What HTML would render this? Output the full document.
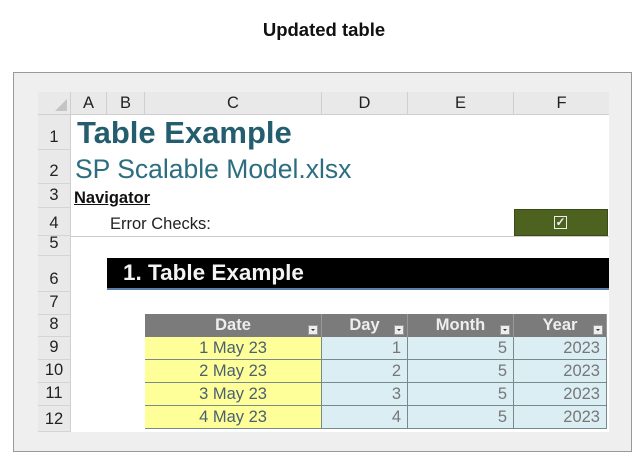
<!DOCTYPE html>
<html><head><style>
*{margin:0;padding:0;box-sizing:border-box}
body{width:640px;height:475px;background:#fff;position:relative;font-family:"Liberation Sans",Arial,sans-serif;overflow:hidden}
.a{position:absolute}
.t{white-space:nowrap}
.rh{position:absolute;left:38px;width:33px;background:#e9e9e9;border-bottom:1px solid #d4d4d4;border-right:1px solid #cfcfcf;font-size:16.5px;color:#222;text-align:center;display:flex;align-items:flex-end;justify-content:center;padding-bottom:2px}
.ch{position:absolute;top:92px;height:23px;background:#e9e9e9;border-right:1px solid #cfcfcf;border-bottom:1px solid #cfcfcf;font-size:16.5px;color:#222;text-align:center;line-height:22px}
.hd{position:absolute;top:314px;height:23px;background:#7b7b7b;color:#eee;font-weight:bold;font-size:16.5px;text-align:center;line-height:22px;border-right:1px solid #999}
.dd{position:absolute;right:3px;bottom:2px;width:10px;height:10px;background:#eee;border:1px solid #999}
.dd:after{content:"";position:absolute;left:2px;top:3px;border-left:2px solid transparent;border-right:2px solid transparent;border-top:2px solid #333}
.c{position:absolute;height:23px;font-size:16.5px;line-height:23px;border-right:1px solid #7a8a8a;border-bottom:1px solid #7a8a8a}
.y{background:#ffff99;color:#4a6070;text-align:center}
.b{background:#dbeef4;color:#777;text-align:right;padding-right:6px}
</style></head><body>
<div class="a t" style="left:0;width:648px;top:19px;text-align:center;font-weight:bold;font-size:18.5px;color:#111">Updated table</div>
<div class="a" style="left:13px;top:72px;width:619px;height:380px;background:#efefef;border:1px solid #999"></div>
<div class="a" style="left:38px;top:92px;width:571px;height:340px;background:#fff"></div>
<div class="ch" style="left:38px;width:33px"><div class="a" style="right:3px;bottom:3px;border-left:12px solid transparent;border-bottom:12px solid #c4c4c4"></div></div>
<div class="ch" style="left:71px;width:36px">A</div>
<div class="ch" style="left:107px;width:38px">B</div>
<div class="ch" style="left:145px;width:177px">C</div>
<div class="ch" style="left:322px;width:86px">D</div>
<div class="ch" style="left:408px;width:106px">E</div>
<div class="ch" style="left:514px;width:95px;border-right:none">F</div>
<div class="rh" style="top:115px;height:35px">1</div>
<div class="rh" style="top:150px;height:34px">2</div>
<div class="rh" style="top:184px;height:24px">3</div>
<div class="rh" style="top:208px;height:28px">4</div>
<div class="rh" style="top:236px;height:20px">5</div>
<div class="rh" style="top:256px;height:36px">6</div>
<div class="rh" style="top:292px;height:23px">7</div>
<div class="rh" style="top:315px;height:22px">8</div>
<div class="rh" style="top:337px;height:23px">9</div>
<div class="rh" style="top:360px;height:23px">10</div>
<div class="rh" style="top:383px;height:23px">11</div>
<div class="rh" style="top:406px;height:26px">12</div>
<div class="a t" style="left:77px;top:115px;font-size:31px;font-weight:bold;color:#245e6e">Table Example</div>
<div class="a t" style="left:75px;top:154px;font-size:26.5px;color:#2c6e80">SP Scalable Model.xlsx</div>
<div class="a t" style="left:74px;top:189px;font-size:16.5px;font-weight:bold;text-decoration:underline;color:#111">Navigator</div>
<div class="a t" style="left:110px;top:215px;font-size:16.5px;color:#222">Error Checks:</div>
<div class="a" style="left:71px;top:236px;width:538px;height:1px;background:#ccc"></div>
<div class="a" style="left:514px;top:209px;width:94px;height:27px;background:#4e6220;border:1px solid #3a4a18"><div class="a" style="left:39px;top:6px;width:13px;height:13px;border:1.5px solid #eee;color:#eee;font-size:12px;line-height:10px;text-align:center;font-weight:bold">✓</div></div>
<div class="a" style="left:107px;top:258px;width:502px;height:32px;background:#000;border-bottom:2px solid #5a7fa8"></div>
<div class="a t" style="left:123px;top:260px;font-size:22.5px;font-weight:bold;color:#f4f4f4">1. Table Example</div>
<div class="hd" style="left:145px;width:177px">Date<span class="dd"></span></div>
<div class="hd" style="left:322px;width:86px">Day<span class="dd"></span></div>
<div class="hd" style="left:408px;width:106px">Month<span class="dd"></span></div>
<div class="hd" style="left:514px;width:93px">Year<span class="dd"></span></div>
<div class="c y" style="left:145px;top:337px;width:177px">1 May 23</div><div class="c b" style="left:322px;top:337px;width:86px">1</div><div class="c b" style="left:408px;top:337px;width:106px">5</div><div class="c b" style="left:514px;top:337px;width:93px">2023</div>
<div class="c y" style="left:145px;top:360px;width:177px">2 May 23</div><div class="c b" style="left:322px;top:360px;width:86px">2</div><div class="c b" style="left:408px;top:360px;width:106px">5</div><div class="c b" style="left:514px;top:360px;width:93px">2023</div>
<div class="c y" style="left:145px;top:383px;width:177px">3 May 23</div><div class="c b" style="left:322px;top:383px;width:86px">3</div><div class="c b" style="left:408px;top:383px;width:106px">5</div><div class="c b" style="left:514px;top:383px;width:93px">2023</div>
<div class="c y" style="left:145px;top:406px;width:177px">4 May 23</div><div class="c b" style="left:322px;top:406px;width:86px">4</div><div class="c b" style="left:408px;top:406px;width:106px">5</div><div class="c b" style="left:514px;top:406px;width:93px">2023</div>
</body></html>
